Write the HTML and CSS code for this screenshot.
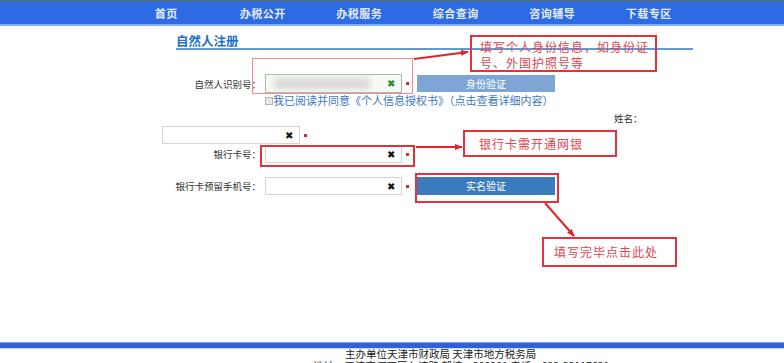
FILE: index.html
```html
<!DOCTYPE html>
<html lang="zh">
<head>
<meta charset="utf-8">
<link rel="stylesheet" href="styles.css">
</head>
<body>
<div class="page">
  <nav class="nav">
    <a class="nav-item">首页</a>
    <a class="nav-item">办税公开</a>
    <a class="nav-item">办税服务</a>
    <a class="nav-item">综合查询</a>
    <a class="nav-item">咨询辅导</a>
    <a class="nav-item">下载专区</a>
  </nav>
  <main class="content">
    <h1 class="title">自然人注册</h1>
    <div class="form">
      <div class="row row-id">
        <label class="label">自然人识别号：</label>
        <div class="input input-green"><span class="blur"></span><span class="clear clear-green">✖</span></div>
        <span class="req"></span>
        <button class="btn btn-light">身份验证</button>
      </div>
      <div class="row row-agree">
        <span class="checkbox"></span><span class="agree">我已阅读并同意《个人信息授权书》（点击查看详细内容）</span>
      </div>
      <div class="row row-name">
        <label class="name-label">姓名：</label>
      </div>
      <div class="row row-nameinput">
        <div class="input input-name"><span class="clear">✖</span></div>
        <span class="req"></span>
      </div>
      <div class="row row-bank">
        <label class="label">银行卡号：</label>
        <div class="input"><span class="clear">✖</span></div>
        <span class="req"></span>
      </div>
      <div class="row row-phone">
        <label class="label">银行卡预留手机号：</label>
        <div class="input"><span class="clear">✖</span></div>
        <span class="req"></span>
        <button class="btn btn-dark">实名验证</button>
      </div>
    </div>
  </main>
  <footer class="footer">
    <div class="footer-bar"></div>
    <p class="footer-line footer-line-1">主办单位天津市财政局 天津市地方税务局</p>
    <p class="footer-line footer-line-2">地址：天津市河西区友谊路 邮编：300201 电话：022-23117621</p>
  </footer>

  <div class="note note-1">填写个人身份信息，如身份证号、外国护照号等</div>
  <div class="note note-2">银行卡需开通网银</div>
  <div class="note note-3">填写完毕点击此处</div>
  <div class="mark mark-1"></div>
  <div class="mark mark-2"></div>
  <div class="mark mark-3"></div>
  <svg class="arrows" width="784" height="363" viewBox="0 0 784 363">
    <defs>
      <marker id="ah" markerWidth="8" markerHeight="6" refX="7" refY="3" orient="auto" markerUnits="userSpaceOnUse">
        <path d="M0,0 L8,3 L0,6 Z" fill="#e5222a"/>
      </marker>
    </defs>
    <line x1="414" y1="59" x2="468" y2="52" stroke="#e5222a" stroke-width="2" marker-end="url(#ah)"/>
    <line x1="416" y1="147" x2="462" y2="147" stroke="#e5222a" stroke-width="2" marker-end="url(#ah)"/>
    <line x1="545" y1="203" x2="574" y2="236" stroke="#e5222a" stroke-width="2" marker-end="url(#ah)"/>
  </svg>
</div>
</body>
</html>
```

FILE: styles.css
```css
* { box-sizing: border-box; }
html, body { margin: 0; padding: 0; background: #fff; }
body {
  font-family: "Noto Sans CJK SC", "Liberation Sans", sans-serif;
  overflow: hidden;
}
.page {
  position: relative;
  width: 784px;
  height: 363px;
  overflow: hidden;
}
.nav {
  height: 26px;
  display: flex;
  align-items: center;
  padding-left: 118px;
  background: #2c6be4;
  border-top: 2px solid #4a6c93;
  border-bottom: 2px solid #7eb0f2;
}
.nav-item {
  width: 96.5px;
  text-align: center;
  color: #e4eaf2;
  font-size: 11px;
  font-weight: bold;
  letter-spacing: 0.5px;
  line-height: 1;
}
.content {
  height: 316px;
  padding-top: 8px;
}
.title {
  margin: 0 0 0 176px;
  width: 517px;
  font-size: 12.5px;
  line-height: 14px;
  font-weight: bold;
  color: #1d6fc6;
  padding-bottom: 0;
  border-bottom: 2px solid #5c9bd6;
}
.form {
  display: flex;
  flex-direction: column;
  padding-left: 162px;
}
.row {
  display: flex;
  align-items: center;
}
.label {
  width: 100px;
  text-align: right;
  font-size: 9.5px;
  color: #333;
  padding-right: 1px;
}
.input {
  position: relative;
  width: 137px;
  height: 19px;
  margin-left: 3px;
  border: 1px solid #d4d4d4;
  background: #fff;
}
.input-green {
  border-color: #9cc39c;
  background: #f6f9f6;
}
.blur {
  position: absolute;
  left: 8px;
  top: 3px;
  width: 96px;
  height: 11px;
  background: #d9d9d9;
  filter: blur(3px);
}
.clear {
  position: absolute;
  right: 6px;
  top: 3px;
  font-size: 9.5px;
  line-height: 11px;
  color: #111;
}
.clear-green { color: #2b8b2b; }
.req {
  width: 3px;
  height: 3px;
  background: #d42b2b;
  margin-left: 4px;
}
.btn {
  margin-left: 8px;
  width: 138px;
  height: 17px;
  border: 0;
  padding: 0;
  font-family: inherit;
  font-size: 10px;
  color: #fff;
  line-height: 17px;
}
.btn-light { background: #7ea6d4; }
.btn-dark { background: #3a7bbd; }
.row-id { margin-top: 24px; }
.row-agree {
  margin-top: 2px;
  padding-left: 103px;
  height: 11px;
}
.checkbox {
  width: 8px;
  height: 8px;
  border: 1px solid #b5b5b5;
  background: #e8e8e8;
}
.agree {
  font-size: 11px;
  line-height: 11px;
  color: #3b78c6;
}
.row-name {
  margin-top: 5px;
  padding-left: 452px;
  height: 14px;
}
.name-label {
  font-size: 9.5px;
  color: #333;
}
.row-nameinput { margin-top: 1px; }
.input-name { margin-left: 0; width: 138px; height: 18px; }
.row-bank { margin-top: 1px; }
.row-bank .input { height: 18px; }
.row-phone { margin-top: 14px; }
.row-phone .input { height: 18px; }
.row-phone .btn { height: 18px; line-height: 18px; }
.footer-bar {
  height: 7px;
  background: #3260dc;
  border-top: 1px solid #76a9f0;
  border-bottom: 1px solid #b3e4f7;
}
.footer-line {
  margin: 0;
  font-size: 10.5px;
  line-height: 12px;
  color: #222;
  white-space: nowrap;
}
.footer-line-1 { padding-left: 345px; margin-top: -1px; }
.footer-line-2 { padding-left: 313px; margin-top: 0; }
.note {
  position: absolute;
  border: 2px solid #e5323a;
  color: #e24450;
  font-size: 12px;
  letter-spacing: 1px;
  line-height: 16px;
}
.note-1 { left: 470px; top: 35px; width: 187px; height: 37px; padding: 2px 4px 0 8px; }
.note-2 { left: 463px; top: 130px; width: 154px; height: 27px; padding: 4px 0 0 14px; }
.note-3 { left: 542px; top: 237px; width: 135px; height: 30px; padding: 5px 0 0 10px; }
.mark {
  position: absolute;
  border: 1px solid #e5323a;
}
.mark-1 { left: 252px; top: 58px; width: 161px; height: 36px; border-color: #f08a8f; }
.mark-2 { left: 260px; top: 145px; width: 155px; height: 22px; border-width: 2px; }
.mark-3 { left: 415px; top: 173px; width: 144px; height: 30px; border-width: 2px; }
.arrows { position: absolute; left: 0; top: 0; pointer-events: none; }
```
